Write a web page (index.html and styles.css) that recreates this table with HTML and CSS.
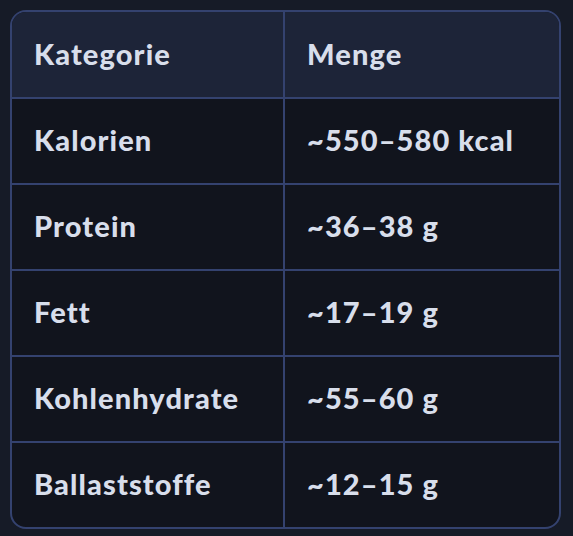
FILE: index.html
```html
<!DOCTYPE html>
<html lang="de">
<head>
<meta charset="utf-8">
<link rel="stylesheet" href="styles.css">
</head>
<body>
<div class="wrap">
  <table class="tbl">
    <thead>
      <tr><th>Kategorie</th><th>Menge</th></tr>
    </thead>
    <tbody>
      <tr><td>Kalorien</td><td>~550–580 kcal</td></tr>
      <tr><td>Protein</td><td>~36–38 g</td></tr>
      <tr><td>Fett</td><td>~17–19 g</td></tr>
      <tr><td>Kohlenhydrate</td><td>~55–60 g</td></tr>
      <tr><td>Ballaststoffe</td><td>~12–15 g</td></tr>
    </tbody>
  </table>
</div>
</body>
</html>
```

FILE: styles.css
```css
html, body {
  margin: 0;
  padding: 0;
  background: #161b27;
}
.wrap {
  padding: 10px 12px 7px 10px;
}
.tbl {
  width: 551px;
  border-collapse: separate;
  border-spacing: 0;
  border: 2px solid #34426f;
  border-radius: 16px;
  overflow: hidden;
  background: #11141d;
  font-family: Lato, "Noto Sans", sans-serif;
  font-weight: 900;
  font-size: 29px;
  letter-spacing: 1.1px;
  color: #d8deeb;
}
.tbl th, .tbl td {
  text-align: left;
  height: 86px;
  padding: 0 0 3px 22px;
  box-sizing: border-box;
  vertical-align: middle;
  font-weight: 900;
}
.tbl th {
  background: #1d2438;
  height: 85px;
}
.tbl th:first-child, .tbl td:first-child {
  width: 273px;
  border-right: 2px solid #34426f;
}
.tbl tbody td {
  border-top: 2px solid #34426f;
}
```
